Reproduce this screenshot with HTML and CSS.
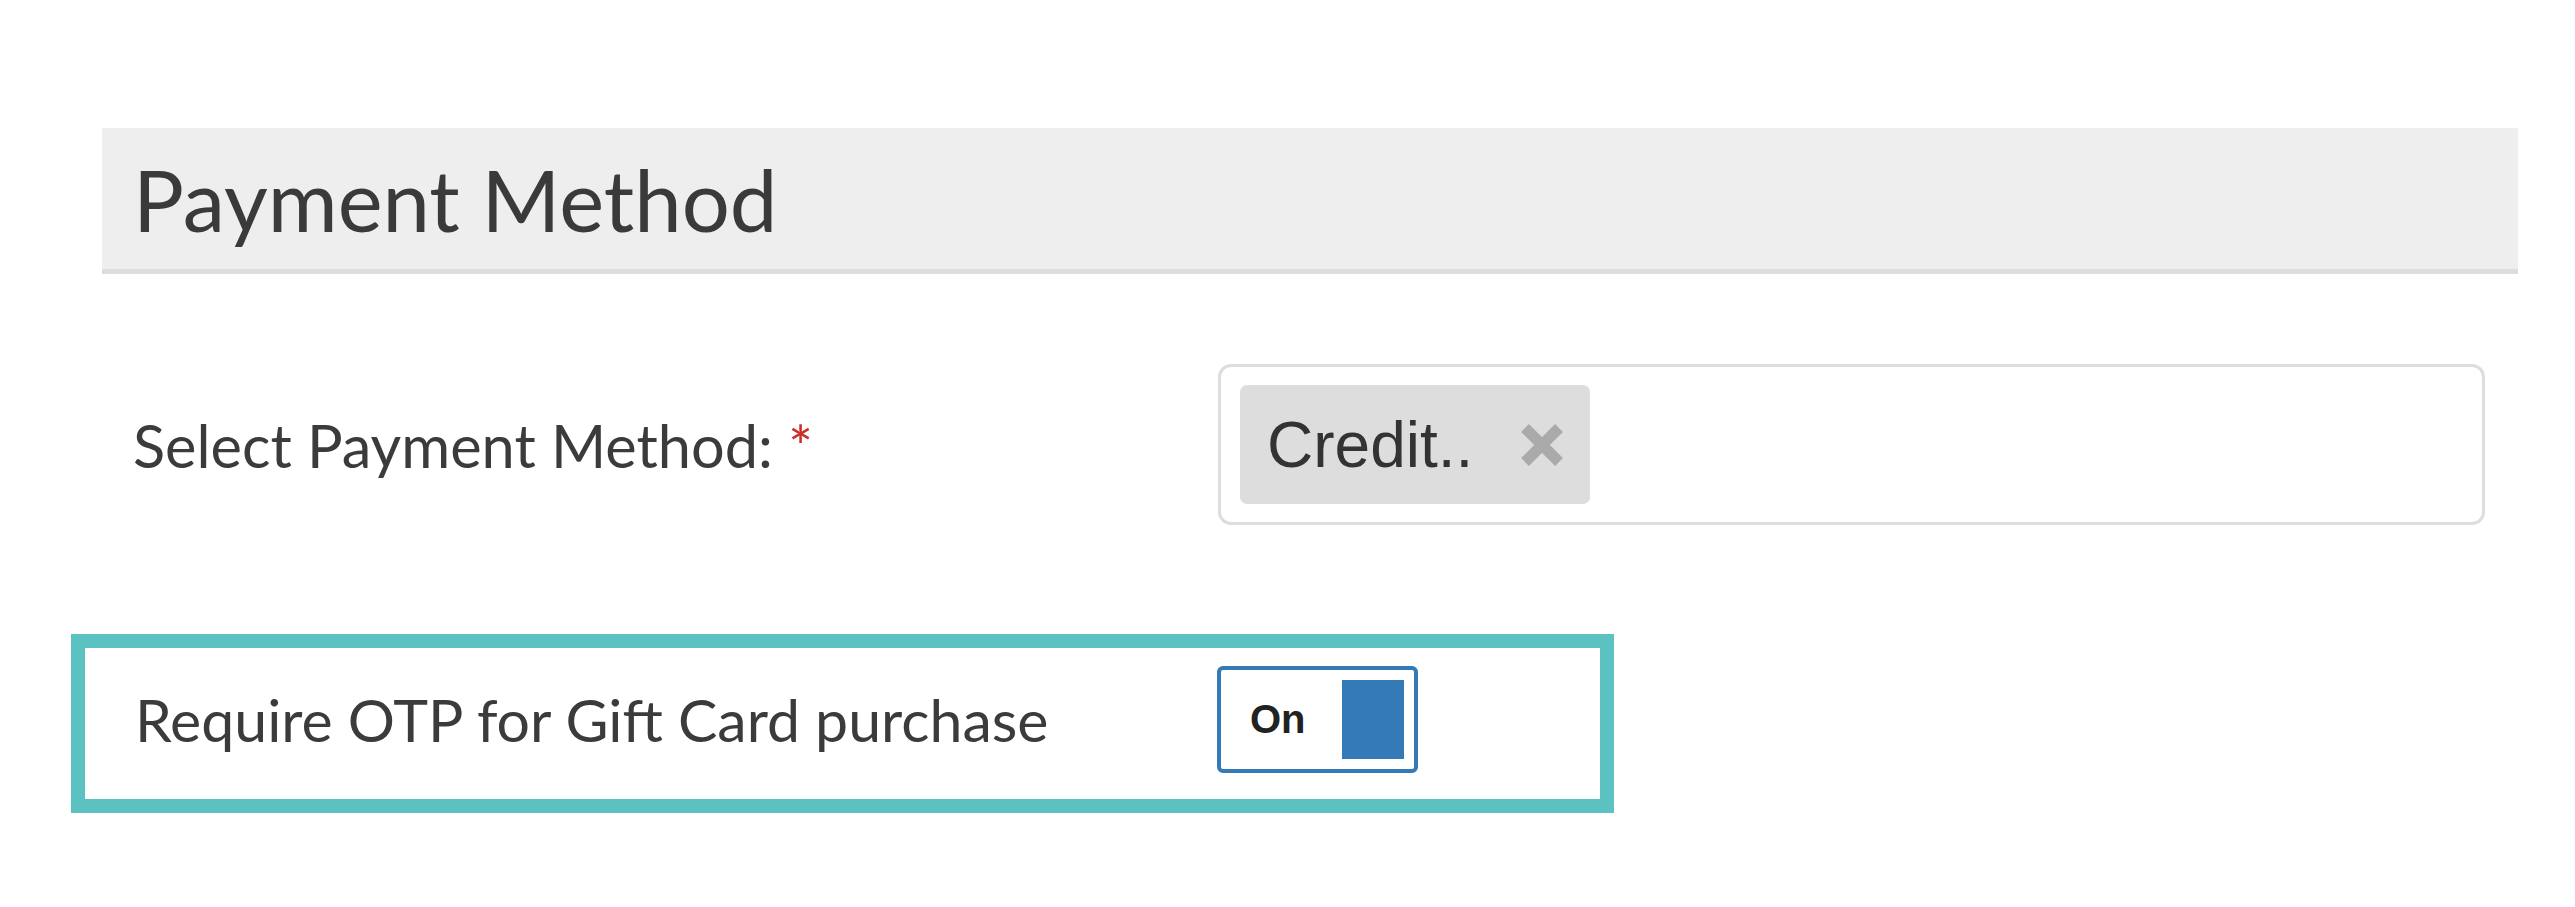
FILE: index.html
```html
<!DOCTYPE html>
<html lang="en">
<head>
  <meta charset="UTF-8" />
  <meta name="viewport" content="width=device-width, initial-scale=1.0" />
  <title>Payment Method</title>
  <link rel="stylesheet" href="styles.css">
</head>
<body>

  <div class="panel">
    <div class="panel-heading">Payment Method</div>

    <div class="form-row">
      <label class="form-label">Select Payment Method: <span class="required">*</span></label>
      <div class="multi-select">
        <span class="tag">
          Credit..
          <svg class="tag-remove" viewBox="0 0 46 46" width="46" height="46">
            <line x1="6" y1="6" x2="40" y2="40" />
            <line x1="40" y1="6" x2="6" y2="40" />
          </svg>
        </span>
      </div>
    </div>

    <div class="form-row highlight">
      <label class="form-label">Require OTP for Gift Card purchase</label>
      <div class="toggle" onclick="this.classList.toggle('off')">
        <span class="toggle-text">On</span>
        <span class="toggle-knob"></span>
      </div>
    </div>
  </div>

</body>
</html>
```

FILE: styles.css
```css
* {
  box-sizing: border-box;
}

body {
  margin: 0;
  background: #fff;
  font-family: "Source Sans Pro", Lato, sans-serif;
  color: #333;
}

.panel {
  width: 2416px;
  margin-left: 102px;
  padding-top: 128px;
}

.panel-heading {
  background: #eee;
  border-bottom: 5px solid #ddd;
  height: 146px;
  padding-left: 31px;
  display: flex;
  align-items: center;
  font-size: 85px;
  color: #3a3a3a;
}

.form-row {
  display: flex;
  align-items: center;
  margin-top: 90px;
  padding-left: 31px;
}

.form-label {
  width: 1085px;
  font-size: 59.5px;
  color: #3b3b3b;
}

.required {
  color: #c9302c;
  font-size: 58px;
}

.multi-select {
  width: 1267px;
  height: 161px;
  border: 3px solid #ddd;
  border-radius: 13px;
  padding: 18px 19px;
  display: flex;
}

.tag {
  background: #ddd;
  border-radius: 7px;
  height: 119px;
  padding: 0 25px 0 27px;
  display: flex;
  align-items: center;
  gap: 46px;
  font-family: "Liberation Sans", Arial, sans-serif;
  font-size: 64px;
  color: #333;
}

.tag-remove line {
  stroke: #aaa;
  stroke-width: 11;
}

.highlight {
  width: 1543px;
  margin-top: 109px;
  margin-left: -31px;
  padding: 18px 0 26px 50px;
  border: 14px solid #5cc1c1;
}

.highlight .form-label {
  width: 1082px;
  font-size: 59px;
}

.toggle {
  width: 201px;
  height: 107px;
  border: 4px solid #337ab7;
  border-radius: 6px;
  display: flex;
  align-items: center;
  justify-content: space-between;
  padding: 0 10px 0 29px;
  cursor: pointer;
}

.toggle-text {
  font-family: "Liberation Sans", Arial, sans-serif;
  font-weight: bold;
  font-size: 40px;
  color: #222;
}

.toggle-knob {
  width: 62px;
  height: 79px;
  background: #337ab7;
}

.toggle.off .toggle-knob {
  background: #ccc;
}
```
